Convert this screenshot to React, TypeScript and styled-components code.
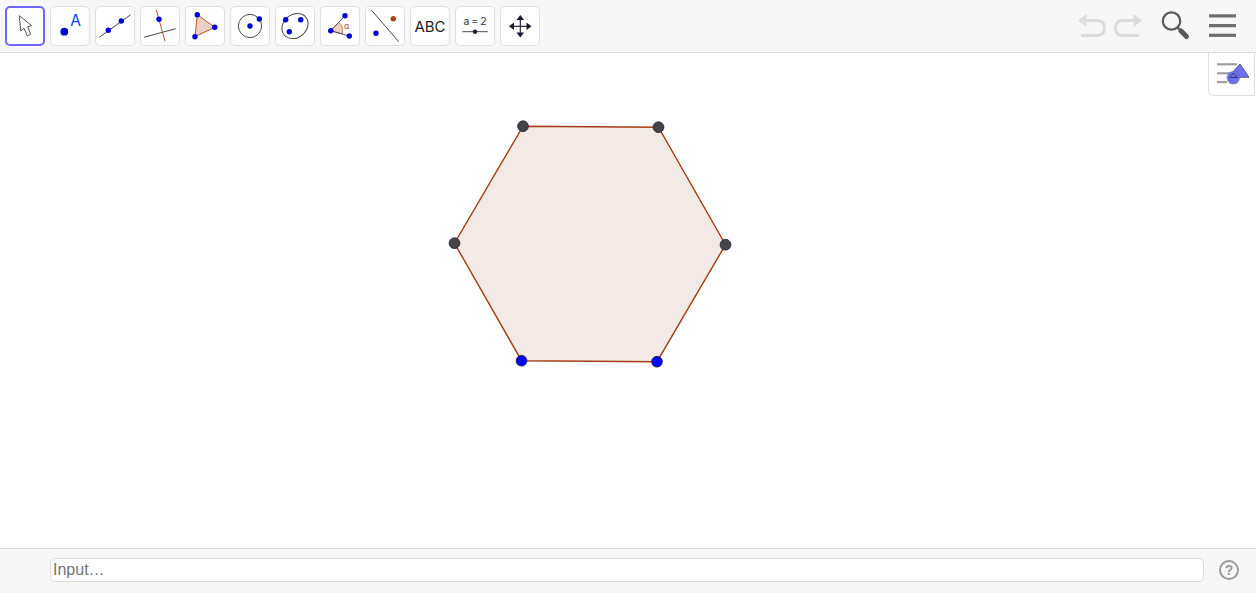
import React from 'react'
import styled, { createGlobalStyle } from 'styled-components'

const GlobalStyle = createGlobalStyle`
    html, body, #root {
        margin: 0;
        height: 100%;
    }

    body {
        font-family: "Liberation Sans", Arial, sans-serif;
        background-color: #ffffff;
        overflow: hidden;
    }
`

const Page = styled.div`
    display: flex;
    flex-direction: column;
    height: 100vh;
`

// Toolbar
const Toolbar = styled.header`
    display: flex;
    align-items: center;
    justify-content: space-between;
    flex: 0 0 53px;
    box-sizing: border-box;
    padding: 0 20px 0 5px;
    background-color: #f7f7f7;
    border-bottom: 1px solid #dcdcdc;
`

const ToolGroup = styled.div`
    display: flex;
    gap: 5px;
    margin-top: -1px;
`

const ToolButton = styled.button<{ $active?: boolean }>`
    width: 40px;
    height: 40px;
    padding: 0;
    box-sizing: border-box;
    background-color: #ffffff;
    border: ${({ $active }) => ($active ? '2px solid #6e66ff' : '1px solid #e0e0e0')};
    border-radius: 5px;
    display: flex;
    align-items: center;
    justify-content: center;
    overflow: visible;
`

const ToolIcon = styled.svg`
    width: 40px;
    height: 40px;
    flex: none;
    display: block;
`

const ActionGroup = styled.div`
    display: flex;
    align-items: center;
`

const ActionIcon = styled.svg<{ $gap?: number }>`
    display: block;
    flex: none;
    margin-left: ${({ $gap }) => $gap || 0}px;
`

// Canvas
const Canvas = styled.main`
    flex: 1;
    min-height: 0;
    position: relative;
    background-color: #ffffff;
`

const Drawing = styled.svg`
    display: block;
    width: 100%;
    height: 100%;
`

const StyleBarButton = styled.div`
    position: absolute;
    top: 0;
    right: 1px;
    width: 47px;
    height: 43px;
    box-sizing: border-box;
    background-color: #ffffff;
    border-left: 1px solid #e0e0e0;
    border-bottom: 1px solid #e0e0e0;
    border-right: 1px solid #e0e0e0;
    border-radius: 0 0 0 6px;
`

const StyleBarIcon = styled.svg`
    width: 45px;
    height: 42px;
    display: block;
`

// Input bar
const InputBar = styled.footer`
    display: flex;
    align-items: center;
    flex: 0 0 45px;
    box-sizing: border-box;
    padding: 0 16px 2px 50px;
    background-color: #f7f7f7;
    border-top: 1px solid #dcdcdc;
`

const AlgebraInput = styled.input`
    flex: 1;
    height: 24px;
    box-sizing: border-box;
    padding: 0 2px;
    font-family: "Liberation Sans", Arial, sans-serif;
    font-size: 16px;
    background-color: #ffffff;
    border: 1px solid #dcdcdc;
    border-radius: 5px;
    outline: none;

    &::placeholder {
        color: #757575;
        opacity: 1;
    }
`

const HelpIcon = styled.svg`
    display: block;
    flex: none;
    margin-left: 14px;
`

const BLUE = '#0000d8'
const BROWN = '#b4562f'
const DARK = '#4a4a4a'

const Dot = ({ x, y, r = 2.7, fill = BLUE }: { x: number, y: number, r?: number, fill?: string }) => (
    <circle cx={x} cy={y} r={r} fill={fill} />
)

const tools: { name: string, icon: React.ReactNode }[] = [
    {
        name: 'Move',
        icon: (
            <path
                d="M14.3 9.7 L15.7 25 L19 22.3 L22.3 30 L25.7 28.3 L22.7 20.7 L26.7 19.7 Z"
                fill="#ffffff"
                stroke="#555555"
                strokeWidth="1"
                strokeLinejoin="round"
            />
        )
    },
    {
        name: 'Point',
        icon: (
            <>
                <Dot x={14.3} y={25.7} r={3.9} />
                <text x={25.7} y={20} fontSize="15.5" textAnchor="middle" fill="#0a3cff" fontFamily="Inter, sans-serif">A</text>
            </>
        )
    },
    {
        name: 'Line',
        icon: (
            <>
                <line x1={4.3} y1={31.3} x2={35.7} y2={8.7} stroke={DARK} strokeWidth="1" />
                <Dot x={13.3} y={24.3} />
                <Dot x={26.3} y={15} />
            </>
        )
    },
    {
        name: 'Perpendicular',
        icon: (
            <>
                <line x1={4} y1={31.3} x2={35.7} y2={22.7} stroke={DARK} strokeWidth="1" />
                <line x1={16.3} y1={4} x2={25} y2={35.3} stroke={BROWN} strokeWidth="1" />
                <Dot x={19} y={13.3} />
            </>
        )
    },
    {
        name: 'Polygon',
        icon: (
            <>
                <polygon points="12.3,8.7 29.7,21.3 10,30.7" fill="#edcfc4" stroke={BROWN} strokeWidth="1" />
                <Dot x={12.3} y={8.7} />
                <Dot x={29.7} y={21.3} />
                <Dot x={10} y={30.7} />
            </>
        )
    },
    {
        name: 'Circle',
        icon: (
            <>
                <circle cx={20} cy={20} r={11.6} fill="none" stroke={DARK} strokeWidth="1" />
                <Dot x={20} y={20} />
                <Dot x={29.3} y={13} />
            </>
        )
    },
    {
        name: 'Ellipse',
        icon: (
            <>
                <ellipse cx={20} cy={20} rx={14} ry={11.5} transform="rotate(-40 20 20)" fill="none" stroke={DARK} strokeWidth="1" />
                <Dot x={10.7} y={13.7} />
                <Dot x={25.7} y={13.7} />
                <Dot x={14.3} y={25.7} />
            </>
        )
    },
    {
        name: 'Angle',
        icon: (
            <>
                <path d="M10.7 24.7 L18.8 16.2 A12 12 0 0 1 22.2 28 Z" fill="#edcfc4" stroke={BROWN} strokeWidth="0.7" />
                <line x1={10.7} y1={24.7} x2={25} y2={9.7} stroke={DARK} strokeWidth="1" />
                <line x1={10.7} y1={24.7} x2={29.3} y2={30} stroke={DARK} strokeWidth="1" />
                <Dot x={10.7} y={24.7} />
                <Dot x={25} y={9.7} />
                <Dot x={29.3} y={30} />
                <text x={26.5} y={23} fontSize="9" textAnchor="middle" fill={BROWN} fontFamily="Roboto, sans-serif">α</text>
            </>
        )
    },
    {
        name: 'Reflect',
        icon: (
            <>
                <line x1={6.3} y1={4} x2={33.7} y2={35.7} stroke={DARK} strokeWidth="1" />
                <Dot x={11} y={27.3} />
                <Dot x={28.3} y={12.7} fill="#a5431c" />
            </>
        )
    },
    {
        name: 'Text',
        icon: <text x={20} y={25.5} fontSize="15" textAnchor="middle" fill="#222222" fontFamily="Inter, sans-serif">ABC</text>
    },
    {
        name: 'Slider',
        icon: (
            <>
                <text x={20} y={18.5} fontSize="10.5" wordSpacing="-1" textAnchor="middle" fill="#333333" fontFamily="Inter, sans-serif">a = 2</text>
                <line x1={7.3} y1={25.7} x2={32.7} y2={25.7} stroke={DARK} strokeWidth="1" />
                <Dot x={20} y={25.7} r={2.2} fill="#1f1f3a" />
            </>
        )
    },
    {
        name: 'Move Graphics View',
        icon: (
            <>
                <line x1={20.3} y1={13} x2={20.3} y2={28} stroke="#1a1a2e" strokeWidth="1.1" />
                <line x1={13} y1={20.3} x2={28} y2={20.3} stroke="#1a1a2e" strokeWidth="1.1" />
                <path d="M20.3 9 L16.5 14 L24.1 14 Z M20.3 31.5 L16.5 26.5 L24.1 26.5 Z M9 20.3 L14 16.5 L14 24.1 Z M31.5 20.3 L26.5 16.5 L26.5 24.1 Z" fill="#1a1a2e" />
            </>
        )
    }
]

const hexagon = [
    { x: 523, y: 73.2 },
    { x: 658.5, y: 74.2 },
    { x: 725.5, y: 191.7 },
    { x: 657, y: 308.7 },
    { x: 521.5, y: 307.7 },
    { x: 454.5, y: 190.2 }
]

const BLUE_POINTS = [3, 4]

export default function App() {
    return (
        <Page>
            <GlobalStyle />
            <Toolbar>
                <ToolGroup>
                    {tools.map((tool, i) => (
                        <ToolButton key={tool.name} title={tool.name} $active={i === 0}>
                            <ToolIcon viewBox="0 0 40 40">{tool.icon}</ToolIcon>
                        </ToolButton>
                    ))}
                </ToolGroup>
                <ActionGroup>
                    <ActionIcon width="28" height="26" viewBox="0 0 28 26">
                        <path d="M8 7.5 H19 Q26.5 7.5 26.5 15 Q26.5 22.5 19 22.5 H3" fill="none" stroke="#dcdcdc" strokeWidth="2.8" />
                        <path d="M0 7.5 L8.5 1 V14 Z" fill="#dcdcdc" />
                    </ActionIcon>
                    <ActionIcon $gap={8} width="28" height="26" viewBox="0 0 28 26">
                        <path d="M20 7.5 H9 Q1.5 7.5 1.5 15 Q1.5 22.5 9 22.5 H25" fill="none" stroke="#dcdcdc" strokeWidth="2.8" />
                        <path d="M28 7.5 L19.5 1 V14 Z" fill="#dcdcdc" />
                    </ActionIcon>
                    <ActionIcon $gap={19} width="30" height="30" viewBox="0 0 30 30">
                        <circle cx="10.5" cy="10" r="8.7" fill="none" stroke="#5a5a5a" strokeWidth="2.2" />
                        <line x1="16.5" y1="16.5" x2="20" y2="20" stroke="#5a5a5a" strokeWidth="2.4" />
                        <line x1="20" y1="20" x2="25.5" y2="25.5" stroke="#5a5a5a" strokeWidth="5" strokeLinecap="round" />
                    </ActionIcon>
                    <ActionIcon $gap={18} width="27" height="24" viewBox="0 0 27 24">
                        <rect x="0" y="0.3" width="27" height="3.2" fill="#6e6e6e" />
                        <rect x="0" y="10" width="27" height="3.2" fill="#6e6e6e" />
                        <rect x="0" y="19.7" width="27" height="3.2" fill="#6e6e6e" />
                    </ActionIcon>
                </ActionGroup>
            </Toolbar>
            <Canvas>
                <Drawing>
                    <polygon
                        points={hexagon.map((p) => `${p.x},${p.y}`).join(' ')}
                        fill="#f3e9e5"
                        stroke="#a63c14"
                        strokeWidth="1.4"
                    />
                    {hexagon.map((p, i) => (
                        <circle
                            key={i}
                            cx={p.x}
                            cy={p.y}
                            r={5.4}
                            fill={BLUE_POINTS.includes(i) ? '#0000ff' : '#444444'}
                            stroke="#1a1a40"
                            strokeWidth="0.8"
                        />
                    ))}
                </Drawing>
                <StyleBarButton>
                    <StyleBarIcon viewBox="0 0 45 42">
                        <rect x="8" y="10.2" width="20" height="2.2" fill="#a0a0a0" />
                        <rect x="8" y="19.2" width="13" height="2.2" fill="#a0a0a0" />
                        <rect x="8" y="28" width="10" height="2.2" fill="#a0a0a0" />
                        <polygon points="31,11 40,24.3 19,24.3" fill="#6b6ff0" stroke="#444466" strokeWidth="0.8" />
                        <circle cx="24.3" cy="24.7" r="6.3" fill="#6b6ff0" stroke="#666688" strokeWidth="0.8" strokeDasharray="1 1" />
                        <polygon points="24.5,20 28.5,24.5 20.5,24.5" fill="none" stroke="#33335a" strokeWidth="0.9" />
                    </StyleBarIcon>
                </StyleBarButton>
            </Canvas>
            <InputBar>
                <AlgebraInput placeholder="Input…" />
                <HelpIcon width="22" height="22" viewBox="0 0 22 22">
                    <circle cx="11" cy="11" r="9" fill="none" stroke="#9a9a9a" strokeWidth="2" />
                    <text x="11" y="16" fontSize="14" fontWeight="700" textAnchor="middle" fill="#9a9a9a" fontFamily="'Liberation Sans', sans-serif">?</text>
                </HelpIcon>
            </InputBar>
        </Page>
    )
}
